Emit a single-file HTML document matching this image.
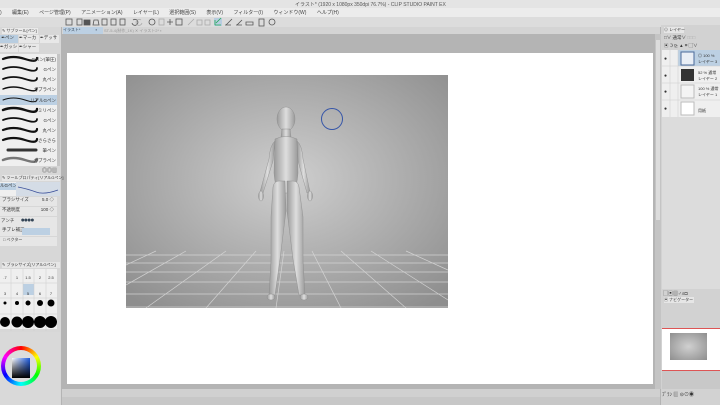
<!DOCTYPE html>
<html><head><meta charset="utf-8"><style>
*{margin:0;padding:0;box-sizing:border-box}
body{width:720px;height:405px;overflow:hidden;background:#b4b4b4;font-family:"Liberation Sans","Noto Sans CJK JP",sans-serif;font-size:5px;color:#333;position:relative}
.a{position:absolute}
.t{white-space:nowrap}
</style></head><body>
<div class="a" style="left:0;top:0;width:720px;height:8px;background:#e4e4e4"></div>
<div class="a t" style="left:295px;top:1px;font-size:5px;color:#555">イラスト* (1920 x 1080px 350dpi 76.7%) - CLIP STUDIO PAINT EX</div>
<div class="a" style="left:0;top:8px;width:720px;height:9px;background:#ececec"></div>
<div class="a t" style="left:0;top:9px;font-size:5px;color:#444;word-spacing:9px">) 編集(E) ページ管理(P) アニメーション(A) レイヤー(L) 選択範囲(S) 表示(V) フィルター(I) ウィンドウ(W) ヘルプ(H)</div>
<div class="a" style="left:0;top:17px;width:720px;height:10px;background:#dcdcdc"></div>
<svg class="a" style="left:64px;top:17px" width="240" height="10">
<g fill="none" stroke="#555" stroke-width=".8">
<rect x="2" y="2" width="6" height="6"/><rect x="13" y="2" width="5" height="6"/><rect x="20" y="3" width="6" height="5" fill="#555"/><path d="M29 8h6l-1-5h-4z"/><rect x="38" y="2" width="5" height="6"/><rect x="47" y="2" width="5" height="6"/><rect x="56" y="2" width="5" height="6"/>
<path d="M68 6a3 3 0 1 0 1-3"/><path d="M78 6a3 3 0 1 1-1-3" stroke="#aaa"/><circle cx="88" cy="5" r="3"/><rect x="95" y="2" width="5" height="6" stroke="#aaa"/><path d="M103 5h6M106 2v6"/><rect x="112" y="2" width="6" height="6"/>
<path d="M124 8l6-6" stroke="#aaa"/><rect x="133" y="3" width="5" height="5" stroke="#aaa"/><rect x="141" y="3" width="5" height="5" stroke="#aaa"/>
<rect x="150" y="1" width="8" height="8" fill="#b8cde0" stroke="none"/><path d="M151 8h6M151 3v5M152 6l5-5" stroke="#2a5"/><path d="M162 8l6-6M161 8h6"/><path d="M172 8h6M173 8l5-5"/><path d="M182 5h7v3h-7z"/><rect x="195" y="2" width="5" height="7"/><circle cx="208" cy="5" r="3"/></g></svg>
<div class="a" style="left:0;top:27px;width:61px;height:378px;background:#d7d7d7"></div>
<div class="a t" style="left:2px;top:28px;width:36px;height:6px;background:#eaeaea;font-size:4px">✎ サブツール[ペン]</div>
<div class="a t" style="left:0;top:35px;width:60px;height:9px;font-size:4.5px">
<span style="display:inline-block;width:18px;height:8px;background:#b8cde0">&nbsp;✒ペン</span><span style="display:inline-block;width:20px;height:8px;background:#e8e8e8;margin-left:1px">✒マーカ</span><span style="display:inline-block;width:19px;height:8px;background:#e8e8e8;margin-left:1px">✒デッサ</span></div>
<div class="a t" style="left:0;top:44px;width:60px;height:9px;font-size:4.5px">
<span style="display:inline-block;width:18px;height:8px;background:#e8e8e8">✒ガッシ</span><span style="display:inline-block;width:20px;height:8px;background:#e8e8e8;margin-left:1px">✒シャー</span></div>
<div class="a" style="left:0;top:54px;width:57px;height:112px;background:#efefef"></div>
<div class="a" style="left:0;top:95px;width:57px;height:10px;background:#bcd0e3"></div>
<svg class="a" style="left:0;top:54px" width="57" height="112">
<g fill="none" stroke="#111" stroke-linecap="round">
<path d="M3 5q10-4 22 0t12-1" stroke-width="2.2"/>
<path d="M3 15q10-4 22 0t12-1" stroke-width="1.8"/>
<path d="M3 25q10-4 22 0t12-1" stroke-width="1.8"/>
<path d="M3 35q10-4 22 0t12-1" stroke-width="1.4"/>
<path d="M3 46q10-4 22 0t12-1" stroke-width="1"/>
<path d="M3 56q10-4 22 0t12-1" stroke-width="2.4"/>
<path d="M3 66q10-4 22 0t12-1" stroke-width="1.8"/>
<path d="M3 76q10-4 22 0t12-1" stroke-width="2.2"/>
<path d="M3 86q10-4 22 0t12-1" stroke-width="2.2"/>
<path d="M8 96h28" stroke-width="3" stroke="#333"/>
<path d="M3 106q10-4 22 0t12-1" stroke-width="2.5" stroke="#777"/>
</g>
<g font-size="4.5" fill="#333" text-anchor="end">
<text x="56" y="7">Gペン(筆圧)</text><text x="56" y="17">Gペン</text><text x="56" y="27">丸ペン</text><text x="56" y="37">カブラペン</text><text x="56" y="48">リアルGペン</text><text x="56" y="58">ミリペン</text><text x="56" y="68">Gペン</text><text x="56" y="78">丸ペン</text><text x="56" y="88">さらさら</text><text x="56" y="98">筆ペン</text><text x="56" y="108">カブラペン</text></g></svg>
<div class="a" style="left:57px;top:54px;width:3px;height:112px;background:#c5c5c5"></div>
<div class="a t" style="left:42px;top:167px;font-size:5px">◎◎▥</div>
<div class="a t" style="left:2px;top:175px;width:58px;height:6px;background:#e6e6e6;font-size:4px">✎ ツールプロパティ[リアルGペン]</div>
<div class="a" style="left:0;top:182px;width:60px;height:14px;background:#efefef"></div>
<div class="a t" style="left:0;top:183px;width:16px;height:7px;background:#bcd0e3;font-size:4.5px">ルGペン</div>
<svg class="a" style="left:16px;top:182px" width="44" height="14"><rect width="44" height="14" fill="#d4dce6"/><path d="M2 5q10 2 18 5t22-2" stroke="#3a4f9a" fill="none" stroke-width=".8"/></svg>
<div class="a" style="left:0;top:197px;width:57px;height:9px;background:#e6e6e6;font-size:4.5px;padding-left:2px">ブラシサイズ <span style="float:right;margin-right:3px">5.0 ◇</span></div>
<div class="a" style="left:0;top:207px;width:57px;height:9px;background:#e6e6e6;font-size:4.5px;padding-left:2px">不透明度 <span style="float:right;margin-right:3px">100 ◇</span></div>
<div class="a" style="left:0;top:217px;width:57px;height:10px;background:#e6e6e6;font-size:4.5px;padding-left:1px">アンチ <span style="color:#345;font-size:7px;letter-spacing:-1px;margin-left:5px">●●●●</span></div>
<div class="a" style="left:0;top:227px;width:57px;height:9px;background:#e6e6e6;font-size:4.5px;padding-left:2px">手ブレ補正<span class="a" style="left:22px;top:1px;width:28px;height:7px;background:#bcd0e3"></span></div>
<div class="a" style="left:0;top:237px;width:57px;height:9px;background:#e6e6e6;font-size:4px;padding-left:3px">□ ベクター</div>
<div class="a t" style="left:2px;top:262px;width:58px;height:6px;background:#e6e6e6;font-size:4px">✎ ブラシサイズ[リアルGペン]</div>
<div class="a" style="left:0;top:269px;width:57px;height:60px;background:#efefef"></div>
<div class="a" style="left:23px;top:284px;width:11px;height:11px;background:#bcd0e3"></div>
<svg class="a" style="left:0;top:269px" width="57" height="62">
<g stroke="#ccc" stroke-width=".5"><path d="M11 0v62M23 0v62M34 0v62M46 0v62M0 14h57M0 29h57M0 45h57"/></g>
<g font-size="4" fill="#333" text-anchor="middle"><text x="5" y="10">.7</text><text x="17" y="10">1</text><text x="28" y="10">1.5</text><text x="40" y="10">2</text><text x="51" y="10">2.5</text>
<text x="5" y="26">3</text><text x="17" y="26">4</text><text x="28" y="26">5</text><text x="40" y="26">6</text><text x="51" y="26">7</text></g>
<g fill="#000"><circle cx="5" cy="34" r="1.5"/><circle cx="17" cy="34" r="2"/><circle cx="28" cy="34" r="2.5"/><circle cx="40" cy="34" r="3"/><circle cx="51" cy="34" r="3.5"/>
<circle cx="5" cy="53" r="5"/><circle cx="17" cy="53" r="5.5"/><circle cx="28" cy="53" r="6"/><circle cx="40" cy="53" r="6"/><circle cx="51" cy="53" r="6"/></g></svg>
<div class="a" style="left:0;top:332px;width:60px;height:73px;background:#d9d9d9"></div>
<div class="a" style="left:1px;top:346px;width:40px;height:40px;border-radius:50%;background:conic-gradient(#f00,#ff0,#0f0,#0ff,#00f,#f0f,#f00)"></div>
<div class="a" style="left:5px;top:350px;width:32px;height:32px;border-radius:50%;background:#dcdcdc"></div>
<div class="a" style="left:12px;top:358px;width:18px;height:20px;background:linear-gradient(to bottom,rgba(0,0,0,0),#000),linear-gradient(to right,#fff,#1e5be0)"></div>
<div class="a" style="left:62px;top:27px;width:598px;height:7px;background:#d4d4d4"></div>
<div class="a t" style="left:63px;top:27px;width:40px;height:7px;background:#bcd0e3;font-size:4px;color:#345">イラスト* <span style="margin-left:14px">▪</span></div>
<div class="a t" style="left:104px;top:28px;font-size:4px;color:#999">ST-5-4(制作_1K) ✕ イラスト2* ▪</div>
<div class="a" style="left:67px;top:53px;width:586px;height:331px;background:#fff"></div>
<div class="a" style="left:655px;top:34px;width:6px;height:355px;background:#c4c4c4"></div>
<div class="a" style="left:656px;top:40px;width:4px;height:180px;background:#dcdcdc"></div>
<div class="a" style="left:62px;top:389px;width:598px;height:8px;background:#d0d0d0"></div>
<div class="a" style="left:62px;top:397px;width:598px;height:8px;background:#c7c7c7"></div>
<svg class="a" style="left:126px;top:75px" width="322" height="233">
<defs><radialGradient id="bg" cx="0.5" cy="0.45" r="0.7"><stop offset="0" stop-color="#cfcfcf"/><stop offset="1" stop-color="#8e8e8e"/></radialGradient>
<linearGradient id="fg" x1="0" x2="1"><stop offset="0" stop-color="#9a9a9a"/><stop offset=".5" stop-color="#dedede"/><stop offset="1" stop-color="#9a9a9a"/></linearGradient></defs>
<rect width="322" height="233" fill="url(#bg)"/>
<g stroke="#d8d8d8" stroke-width=".7" fill="none" opacity=".9">
<path d="M0 180h322M0 188h322M0 197h322M0 207h322M0 219h322M0 232h322"/>
<path d="M60 176L0 210M100 176L20 233M130 176L80 233M158 176L150 233M186 176L215 233M215 176L280 233M245 176L322 225M280 176L322 195M30 176L0 190"/></g>
<g fill="url(#fg)" stroke="#888" stroke-width=".4">
<ellipse cx="160" cy="44" rx="9" ry="12"/>
<path d="M156 54h8l1 8h-10z"/>
<path d="M149 64q11-5 22 0l1 34q-1 12-4 20h-16q-3-8-4-20z"/>
<path d="M149 66q-5 4-6 18l-9 33 3 1 10-32z"/>
<path d="M171 66q5 4 6 18l7 33-3 1-9-32z"/>
<path d="M147 112q1-6 6-6h6l1 30-6 48-5 36-6 0 2-34 0-44z"/>
<path d="M173 112q-1-6-6-6h-6l0 30 6 48 6 36 6 0-2-34 0-44z"/>
<ellipse cx="135" cy="121" rx="2.5" ry="5"/><ellipse cx="184" cy="121" rx="2.5" ry="5"/>
<ellipse cx="145" cy="222" rx="4" ry="3"/><ellipse cx="178" cy="222" rx="4" ry="3"/>
</g>
</svg>
<div class="a" style="left:321px;top:108px;width:22px;height:22px;border:1.5px solid #3555a8;border-radius:50%"></div>
<div class="a" style="left:661px;top:25px;width:59px;height:380px;background:#d2d2d2"></div>
<div class="a t" style="left:664px;top:27px;font-size:4px;background:#e6e6e6;width:20px;height:6px">⊙ レイヤー</div>
<div class="a t" style="left:664px;top:35px;font-size:4.5px">□∨ 通常∨ <span style="color:#aaa">□□□</span></div>
<div class="a t" style="left:664px;top:43px;font-size:4.5px">▣ ℑ ⊵ ▲ ⌗ ▢∨</div>
<div class="a" style="left:662px;top:50px;width:58px;height:67px;background:#efefef"></div>
<div class="a" style="left:678px;top:50px;width:42px;height:16px;background:#bcd0e3"></div>
<svg class="a" style="left:662px;top:50px" width="58" height="67">
<g stroke="#ccc" stroke-width=".5"><path d="M0 16h58M0 33h58M0 50h58M8 0v67M16 0v67"/></g>
<g fill="#333" font-size="5"><text x="2" y="10">●</text><text x="2" y="27">●</text><text x="2" y="43">●</text><text x="2" y="60">●</text></g>
<rect x="19" y="2" width="13" height="13" fill="#e9eef5" stroke="#4a6a9a"/>
<rect x="19" y="19" width="13" height="12" fill="#333"/>
<rect x="19" y="35" width="13" height="13" fill="#f4f4f4" stroke="#bbb"/>
<rect x="19" y="52" width="13" height="13" fill="#fff" stroke="#bbb"/>
<g font-size="4" fill="#333"><text x="36" y="7">◎ 100 %</text><text x="36" y="13">レイヤー 3</text><text x="36" y="24">52 % 通常</text><text x="36" y="30">レイヤー 2</text><text x="36" y="40">100 % 通常</text><text x="36" y="46">レイヤー 1</text><text x="36" y="62">用紙</text></g></svg>
<div class="a" style="left:662px;top:117px;width:58px;height:172px;background:#dcdcdc"></div>
<div class="a t" style="left:663px;top:290px;font-size:5px">▢▣▥♂⌕◘</div>
<div class="a t" style="left:664px;top:297px;font-size:4px;background:#e6e6e6;width:30px;height:6px">▣ ナビゲーター</div>
<div class="a" style="left:662px;top:328px;width:58px;height:43px;background:#fff;border-top:1.5px solid #d55;border-bottom:1.5px solid #d55"></div>
<div class="a" style="left:670px;top:333px;width:37px;height:27px;background:radial-gradient(#d0d0d0,#8e8e8e)"></div>
<div class="a" style="left:662px;top:371px;width:58px;height:18px;background:#c8c8c8"></div>
<div class="a t" style="left:662px;top:391px;font-size:5px">ﾌﾟﾗﾝ ▥ ⊝⊙◉</div>
</body></html>
